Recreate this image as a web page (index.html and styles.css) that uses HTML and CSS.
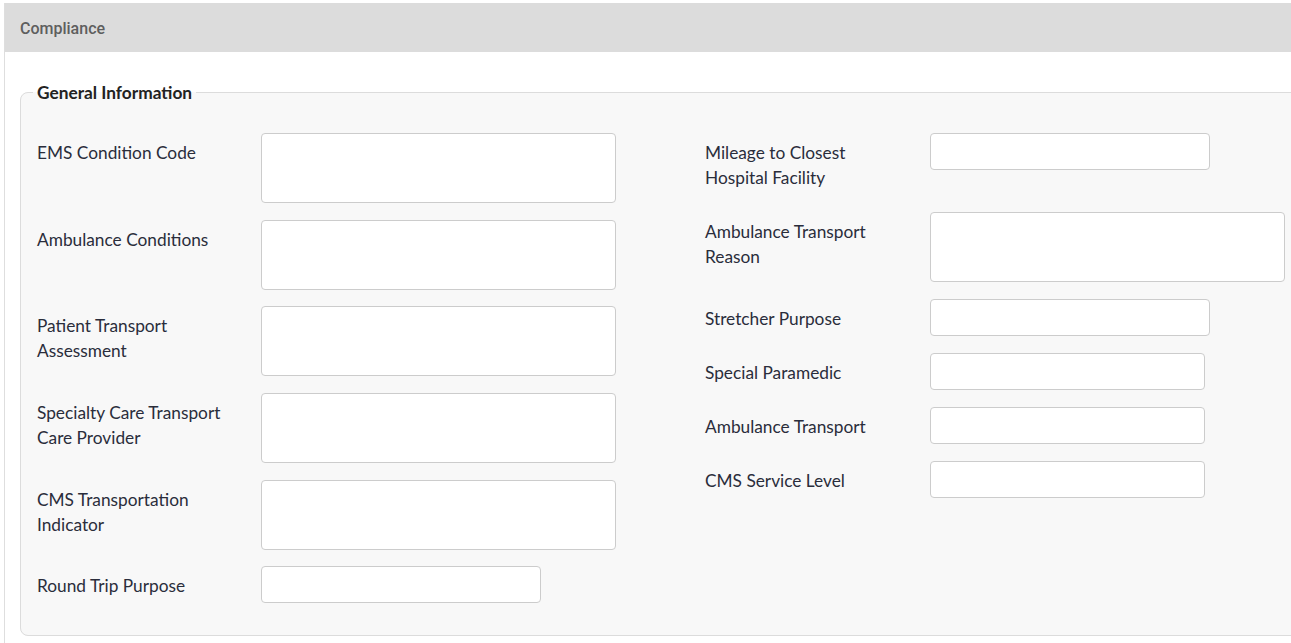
FILE: index.html
```html
<!DOCTYPE html>
<html>
<head>
<meta charset="utf-8">
<title>Compliance</title>
<link rel="stylesheet" href="styles.css">
</head>
<body>
<div class="panel">
  <div class="panel-header">Compliance</div>
  <div class="panel-body">
    <fieldset class="group">
      <legend>General Information</legend>
      <div class="cols">
        <div class="col">
          <div class="row"><label>EMS Condition Code</label><div class="box tall w355"></div></div>
          <div class="row"><label>Ambulance Conditions</label><div class="box tall w355"></div></div>
          <div class="row"><label>Patient Transport Assessment</label><div class="box tall w355"></div></div>
          <div class="row"><label>Specialty Care Transport Care Provider</label><div class="box tall w355"></div></div>
          <div class="row"><label>CMS Transportation Indicator</label><div class="box tall w355"></div></div>
          <div class="row"><label>Round Trip Purpose</label><div class="box short w280"></div></div>
        </div>
        <div class="col col-right">
          <div class="row"><label>Mileage to Closest Hospital Facility</label><div class="box short w280"></div></div>
          <div class="row"><label>Ambulance Transport Reason</label><div class="box tall w355"></div></div>
          <div class="row"><label>Stretcher Purpose</label><div class="box short w280"></div></div>
          <div class="row"><label>Special Paramedic</label><div class="box short w275"></div></div>
          <div class="row"><label>Ambulance Transport</label><div class="box short w275"></div></div>
          <div class="row"><label>CMS Service Level</label><div class="box short w275"></div></div>
        </div>
      </div>
    </fieldset>
  </div>
</div>
</body>
</html>
```
FILE: styles.css
```css
html, body {
  margin: 0;
  padding: 0;
  overflow: hidden;
  background: #ffffff;
}
body {
  font-family: Lato, "Noto Sans", sans-serif;
  color: #2a2d3b;
}
.panel {
  margin: 3px 0 0 4px;
  width: 1420px;
  border-left: 1px solid #dedede;
  background: #ffffff;
  min-height: 700px;
}
.panel-header {
  height: 49px;
  background: #dcdcdc;
  display: flex;
  align-items: center;
  padding: 1px 0 0 15px;
  box-sizing: border-box;
  font-family: Roboto, "Liberation Sans", sans-serif;
  font-weight: 500;
  font-size: 16px;
  color: #5e5e5e;
}
.panel-body {
  padding: 28px 0 0 15px;
}
.group {
  margin: 0;
  padding: 29px 16px 15px 16px;
  border: 1px solid #dcdcdc;
  border-radius: 8px;
  background: #f8f8f8;
  width: 1336px;
}
.group legend {
  padding: 1px 4px 0 4px;
  margin-left: -4px;
  font-weight: 700;
  font-size: 17.3px;
  line-height: 23px;
  color: #222222;
}
.cols {
  display: grid;
  grid-template-columns: 669px 667px;
}
.row {
  display: flex;
  align-items: flex-start;
  margin-bottom: 16.67px;
}
.col-right .row {
  margin-bottom: 17px;
}
.row label {
  width: 200px;
  flex: 0 0 200px;
  margin-right: 24px;
  padding: 7px 0 5px 0;
  font-size: 17.3px;
  line-height: 25px;
}
.col-right .row label {
  margin-left: -1px;
  margin-right: 25px;
}
.box {
  background: #ffffff;
  border: 1px solid #cccccc;
  border-radius: 4px;
  box-sizing: border-box;
}
.tall { height: 70px; }
.short { height: 37px; }
.w355 { width: 355px; }
.w280 { width: 280px; }
.w275 { width: 275px; }
```
